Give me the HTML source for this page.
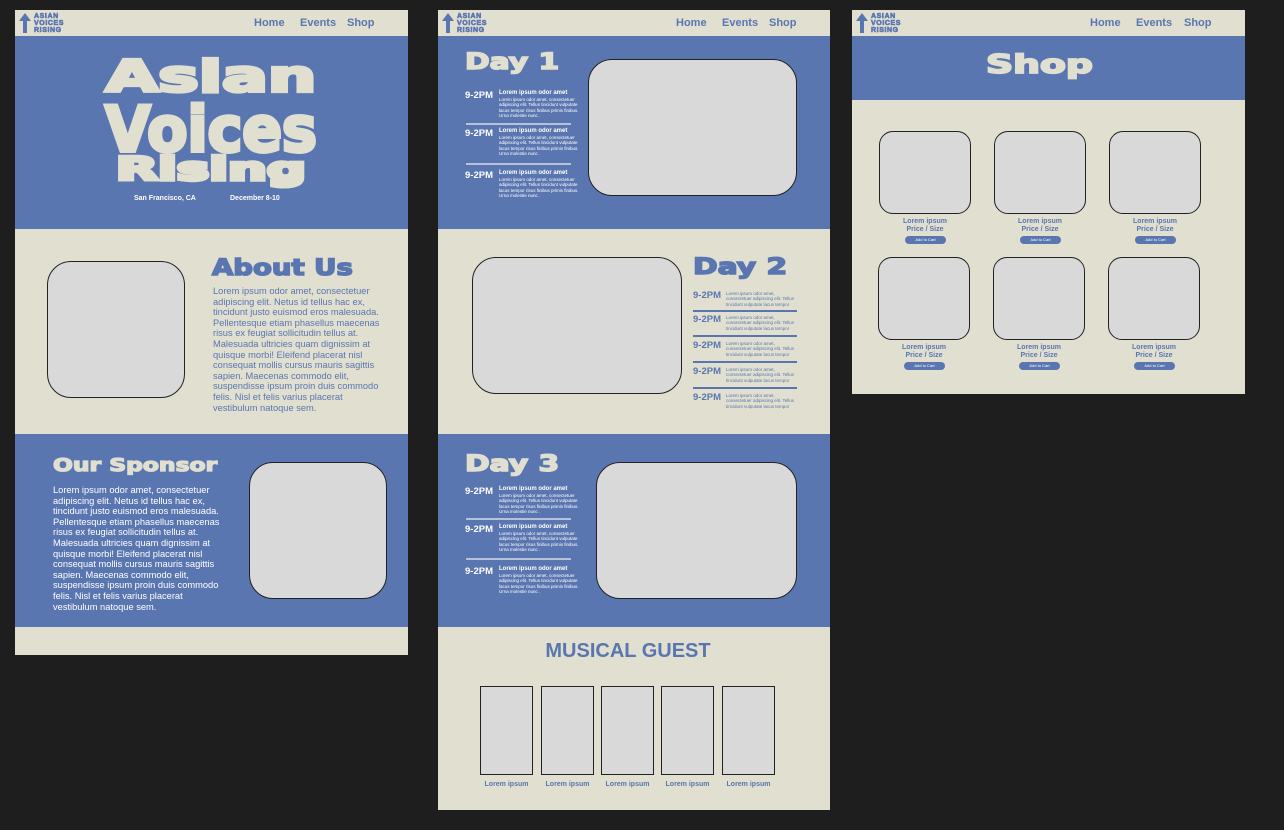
<!DOCTYPE html>
<html><head><meta charset="utf-8"><style>
*{margin:0;padding:0;box-sizing:border-box}
body{width:1284px;height:830px;background:#1e1e1e;position:relative;overflow:hidden;font-family:"Liberation Sans",sans-serif}
.a{position:absolute}
.bl{background:#5a76b0}.bg{background:#e0dfd0}
.box{position:absolute;background:#d9d9d9;border:1px solid #222}
.nav a{position:absolute;top:7px;font-size:11px;font-weight:bold;color:#5a76b0;text-decoration:none}
.logo{position:absolute;font-size:7px;font-weight:900;color:#5a76b0;line-height:7px;letter-spacing:0.6px;-webkit-text-stroke:0.6px #5a76b0}
.h{position:absolute;font-family:"DejaVu Sans","Liberation Sans",sans-serif;font-weight:900;transform-origin:left top;white-space:nowrap}
.p{position:absolute;font-size:9.3px;line-height:10.6px}
.t{position:absolute;font-size:9.5px;font-weight:bold;color:#fff}
.d{position:absolute;font-size:4.5px;line-height:5.3px;color:#fff;width:80px}
.d b{font-size:6px;display:block;line-height:8px}
.ln{position:absolute;height:1.5px}
.lab{position:absolute;font-size:7px;font-weight:bold;color:#5a76b0;text-align:center}
.btn{position:absolute;width:41px;height:8px;border-radius:4px;background:#5a76b0;color:#fff;font-size:4px;line-height:8px;text-align:center}
.hero{position:absolute;left:211px;font-family:"DejaVu Sans",sans-serif;font-weight:900;color:#e0dfd0;-webkit-text-stroke:3px #e0dfd0;white-space:nowrap;transform-origin:center top}
</style></head><body>

<!-- Frame 1 -->
<div class="a bg" style="left:15px;top:10px;width:393px;height:645px"></div>
<div class="a bl" style="left:15px;top:36px;width:393px;height:193px"></div>
<div class="a bl" style="left:15px;top:434px;width:393px;height:193px"></div>
<svg class="a" style="left:18px;top:12px" width="14" height="22"><path d="M7 1 L13 9 L9 9 L9 21 L5 21 L5 9 L1 9Z" fill="#5a76b0"/></svg>
<div class="logo" style="left:34px;top:13px">ASIAN<br>VOICES<br>RISING</div>
<div class="nav"><a style="left:254px;top:17px">Home</a><a style="left:300px;top:17px">Events</a><a style="left:347px;top:17px">Shop</a></div>
<div class="hero" style="top:52px;font-size:40px;transform:translateX(-50%) scale(1.7,1.1)">Asian</div>
<div class="hero" style="top:94px;font-size:48px;transform:translateX(-50%) scale(1.22,1.3)">Voices</div>
<div class="hero" style="top:150px;font-size:28px;transform:translateX(-50%) scale(1.95,1.15)">Rising</div>
<div class="a" style="left:134px;top:195px;font-size:7px;font-weight:bold;color:#fff">San Francisco, CA</div>
<div class="a" style="left:230px;top:195px;font-size:7px;font-weight:bold;color:#fff">December 8-10</div>
<div class="box" style="left:47px;top:261px;width:138px;height:137px;border-radius:24px"></div>
<div class="h" style="left:212px;top:256px;color:#5a76b0;font-size:22px;transform:scale(1.25,1);-webkit-text-stroke:1.5px #5a76b0">About Us</div>
<div class="p" style="left:213px;top:286px;width:175px;color:#5a76b0">Lorem ipsum odor amet, consectetuer adipiscing elit. Netus id tellus hac ex, tincidunt justo euismod eros malesuada. Pellentesque etiam phasellus maecenas risus ex feugiat sollicitudin tellus at. Malesuada ultricies quam dignissim at quisque morbi! Eleifend placerat nisl consequat mollis cursus mauris sagittis sapien. Maecenas commodo elit, suspendisse ipsum proin duis commodo felis. Nisl et felis varius placerat vestibulum natoque sem.</div>
<div class="h" style="left:53px;top:455px;color:#e0dfd0;font-size:18px;transform:scale(1.3,1);-webkit-text-stroke:1.3px #e0dfd0">Our Sponsor</div>
<div class="p" style="left:53px;top:485px;width:175px;color:#fff">Lorem ipsum odor amet, consectetuer adipiscing elit. Netus id tellus hac ex, tincidunt justo euismod eros malesuada. Pellentesque etiam phasellus maecenas risus ex feugiat sollicitudin tellus at. Malesuada ultricies quam dignissim at quisque morbi! Eleifend placerat nisl consequat mollis cursus mauris sagittis sapien. Maecenas commodo elit, suspendisse ipsum proin duis commodo felis. Nisl et felis varius placerat vestibulum natoque sem.</div>
<div class="box" style="left:249px;top:462px;width:138px;height:137px;border-radius:24px"></div>

<!-- Frame 2 -->
<div class="a bg" style="left:438px;top:10px;width:392px;height:800px"></div>
<div class="a bl" style="left:438px;top:36px;width:392px;height:193px"></div>
<div class="a bl" style="left:438px;top:434px;width:392px;height:193px"></div>
<svg class="a" style="left:441px;top:12px" width="14" height="22"><path d="M7 1 L13 9 L9 9 L9 21 L5 21 L5 9 L1 9Z" fill="#5a76b0"/></svg>
<div class="logo" style="left:457px;top:13px">ASIAN<br>VOICES<br>RISING</div>
<div class="nav"><a style="left:676px;top:17px">Home</a><a style="left:722px;top:17px">Events</a><a style="left:769px;top:17px">Shop</a></div>

<div class="h" style="left:465px;top:50px;color:#e0dfd0;font-size:22px;transform:scale(1.35,1);-webkit-text-stroke:1.5px #e0dfd0">Day 1</div>
<div class="t" style="left:465px;top:90px">9-2PM</div><div class="d" style="left:499px;top:89px"><b>Lorem ipsum odor amet</b>Lorem ipsum odor amet, consectetuer adipiscing elit. Tellus tincidunt vulputate lacus tempor risus finibus primis finibus. Urna molestie nunc .</div>
<div class="ln" style="left:466px;top:123px;width:105px;background:#b7c2da"></div>
<div class="t" style="left:465px;top:128px">9-2PM</div><div class="d" style="left:499px;top:127px"><b>Lorem ipsum odor amet</b>Lorem ipsum odor amet, consectetuer adipiscing elit. Tellus tincidunt vulputate lacus tempor risus finibus primis finibus. Urna molestie nunc .</div>
<div class="ln" style="left:466px;top:163px;width:105px;background:#b7c2da"></div>
<div class="t" style="left:465px;top:170px">9-2PM</div><div class="d" style="left:499px;top:169px"><b>Lorem ipsum odor amet</b>Lorem ipsum odor amet, consectetuer adipiscing elit. Tellus tincidunt vulputate lacus tempor risus finibus primis finibus. Urna molestie nunc .</div>
<div class="box" style="left:588px;top:59px;width:209px;height:137px;border-radius:24px"></div>

<div class="box" style="left:472px;top:257px;width:210px;height:137px;border-radius:24px"></div>
<div class="h" style="left:693px;top:255px;color:#5a76b0;font-size:22px;transform:scale(1.35,1);-webkit-text-stroke:1.5px #5a76b0">Day 2</div>
<div class="t" style="left:693px;top:290px;color:#5a76b0">9-2PM</div><div class="d" style="left:726px;top:291px;color:#5a76b0;width:74px">Lorem ipsum odor amet, consectetuer adipiscing elit. Tellus tincidunt vulputate lacus tempor</div>
<div class="ln" style="left:693px;top:310px;width:104px;background:#5a76b0"></div>
<div class="t" style="left:693px;top:314px;color:#5a76b0">9-2PM</div><div class="d" style="left:726px;top:315px;color:#5a76b0;width:74px">Lorem ipsum odor amet, consectetuer adipiscing elit. Tellus tincidunt vulputate lacus tempor</div>
<div class="ln" style="left:693px;top:335px;width:104px;background:#5a76b0"></div>
<div class="t" style="left:693px;top:340px;color:#5a76b0">9-2PM</div><div class="d" style="left:726px;top:341px;color:#5a76b0;width:74px">Lorem ipsum odor amet, consectetuer adipiscing elit. Tellus tincidunt vulputate lacus tempor</div>
<div class="ln" style="left:693px;top:361px;width:104px;background:#5a76b0"></div>
<div class="t" style="left:693px;top:366px;color:#5a76b0">9-2PM</div><div class="d" style="left:726px;top:367px;color:#5a76b0;width:74px">Lorem ipsum odor amet, consectetuer adipiscing elit. Tellus tincidunt vulputate lacus tempor</div>
<div class="ln" style="left:693px;top:387px;width:104px;background:#5a76b0"></div>
<div class="t" style="left:693px;top:392px;color:#5a76b0">9-2PM</div><div class="d" style="left:726px;top:393px;color:#5a76b0;width:74px">Lorem ipsum odor amet, consectetuer adipiscing elit. Tellus tincidunt vulputate lacus tempor</div>

<div class="h" style="left:465px;top:452px;color:#e0dfd0;font-size:22px;transform:scale(1.35,1);-webkit-text-stroke:1.5px #e0dfd0">Day 3</div>
<div class="t" style="left:465px;top:486px">9-2PM</div><div class="d" style="left:499px;top:485px"><b>Lorem ipsum odor amet</b>Lorem ipsum odor amet, consectetuer adipiscing elit. Tellus tincidunt vulputate lacus tempor risus finibus primis finibus. Urna molestie nunc .</div>
<div class="ln" style="left:466px;top:518px;width:105px;background:#b7c2da"></div>
<div class="t" style="left:465px;top:524px">9-2PM</div><div class="d" style="left:499px;top:523px"><b>Lorem ipsum odor amet</b>Lorem ipsum odor amet, consectetuer adipiscing elit. Tellus tincidunt vulputate lacus tempor risus finibus primis finibus. Urna molestie nunc .</div>
<div class="ln" style="left:466px;top:558px;width:105px;background:#b7c2da"></div>
<div class="t" style="left:465px;top:566px">9-2PM</div><div class="d" style="left:499px;top:565px"><b>Lorem ipsum odor amet</b>Lorem ipsum odor amet, consectetuer adipiscing elit. Tellus tincidunt vulputate lacus tempor risus finibus primis finibus. Urna molestie nunc .</div>
<div class="box" style="left:596px;top:462px;width:201px;height:137px;border-radius:24px"></div>

<div class="a" style="left:432px;top:640px;width:392px;text-align:center;font-size:20px;font-weight:bold;color:#5a76b0">MUSICAL GUEST</div>
<div class="box" style="left:480px;top:686px;width:53px;height:89px"></div>
<div class="box" style="left:541px;top:686px;width:53px;height:89px"></div>
<div class="box" style="left:601px;top:686px;width:53px;height:89px"></div>
<div class="box" style="left:661px;top:686px;width:53px;height:89px"></div>
<div class="box" style="left:722px;top:686px;width:53px;height:89px"></div>
<div class="lab" style="left:476px;top:781px;width:61px">Lorem ipsum</div>
<div class="lab" style="left:537px;top:781px;width:61px">Lorem ipsum</div>
<div class="lab" style="left:597px;top:781px;width:61px">Lorem ipsum</div>
<div class="lab" style="left:657px;top:781px;width:61px">Lorem ipsum</div>
<div class="lab" style="left:718px;top:781px;width:61px">Lorem ipsum</div>

<!-- Frame 3 -->
<div class="a bg" style="left:852px;top:10px;width:393px;height:384px"></div>
<div class="a bl" style="left:852px;top:36px;width:393px;height:64px"></div>
<svg class="a" style="left:855px;top:12px" width="14" height="22"><path d="M7 1 L13 9 L9 9 L9 21 L5 21 L5 9 L1 9Z" fill="#5a76b0"/></svg>
<div class="logo" style="left:871px;top:13px">ASIAN<br>VOICES<br>RISING</div>
<div class="nav"><a style="left:1090px;top:17px">Home</a><a style="left:1136px;top:17px">Events</a><a style="left:1184px;top:17px">Shop</a></div>
<div class="h" style="left:986px;top:50px;color:#e0dfd0;font-size:26px;transform:scale(1.45,1);-webkit-text-stroke:1.8px #e0dfd0">Shop</div>

<div class="box" style="left:879px;top:131px;width:92px;height:83px;border-radius:14px"></div>
<div class="box" style="left:994px;top:131px;width:92px;height:83px;border-radius:14px"></div>
<div class="box" style="left:1109px;top:131px;width:92px;height:83px;border-radius:14px"></div>
<div class="box" style="left:878px;top:257px;width:92px;height:83px;border-radius:14px"></div>
<div class="box" style="left:993px;top:257px;width:92px;height:83px;border-radius:14px"></div>
<div class="box" style="left:1108px;top:257px;width:92px;height:83px;border-radius:14px"></div>

<div class="lab" style="left:885px;top:218px;width:80px;line-height:8px">Lorem ipsum<br>Price / Size</div>
<div class="btn" style="left:905px;top:236px">Add to Cart</div>
<div class="lab" style="left:1000px;top:218px;width:80px;line-height:8px">Lorem ipsum<br>Price / Size</div>
<div class="btn" style="left:1020px;top:236px">Add to Cart</div>
<div class="lab" style="left:1115px;top:218px;width:80px;line-height:8px">Lorem ipsum<br>Price / Size</div>
<div class="btn" style="left:1135px;top:236px">Add to Cart</div>
<div class="lab" style="left:884px;top:344px;width:80px;line-height:8px">Lorem ipsum<br>Price / Size</div>
<div class="btn" style="left:904px;top:362px">Add to Cart</div>
<div class="lab" style="left:999px;top:344px;width:80px;line-height:8px">Lorem ipsum<br>Price / Size</div>
<div class="btn" style="left:1019px;top:362px">Add to Cart</div>
<div class="lab" style="left:1114px;top:344px;width:80px;line-height:8px">Lorem ipsum<br>Price / Size</div>
<div class="btn" style="left:1134px;top:362px">Add to Cart</div>
</body></html>
